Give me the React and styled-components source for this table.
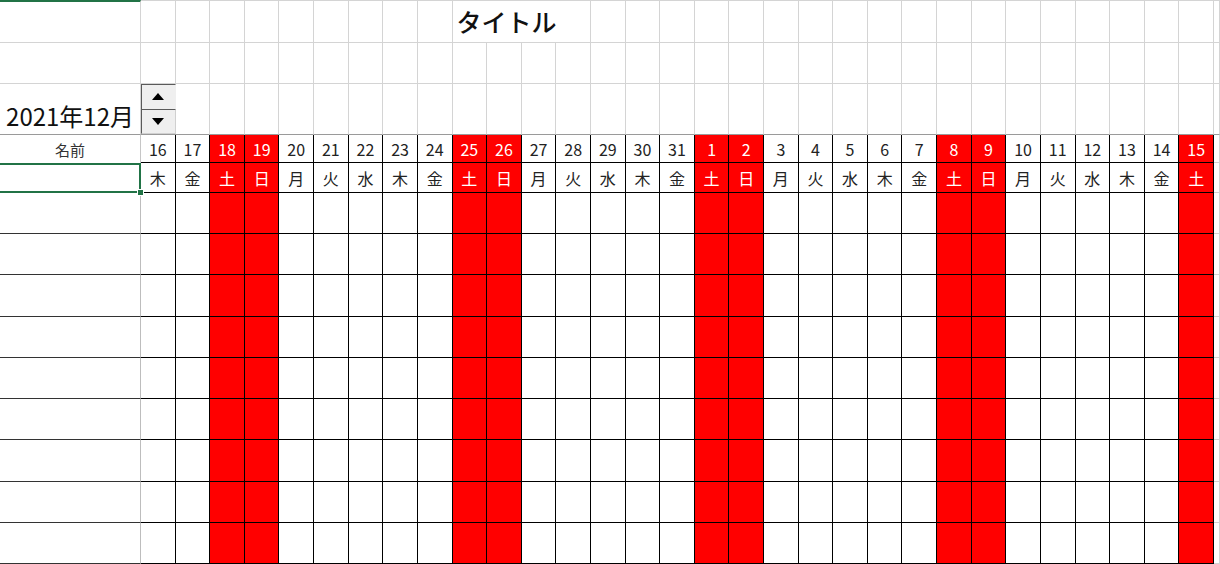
import React from 'react';
import styled, { createGlobalStyle } from 'styled-components';

const GlobalStyle = createGlobalStyle`
  html, body {
    margin: 0;
    background: #fff;
    overflow: hidden;
  }
  body {
    font-family: "Noto Sans CJK JP", "Noto Sans", sans-serif;
    color: #222;
  }
`;

const GREEN = '#217346';
const GRID = '#d4d4d4';

const Sheet = styled.div`
  display: grid;
  width: 1220px;
  height: 564px;
  grid-template-columns: 141px repeat(31, minmax(0, 1fr)) 6px;
  grid-template-rows: 43px 41px 51px 28px 30px repeat(9, minmax(0, 1fr));
`;

// plain sheet cell, only the light excel gridlines
const GridCell = styled.div`
  box-sizing: border-box;
  border-right: 1px solid ${GRID};
  border-bottom: 1px solid ${p => p.$under || GRID};
  border-top: ${p => (p.$top ? p.$top : 'none')};
`;

const TitleCell = styled.div`
  grid-column: span 4;
  box-sizing: border-box;
  border-top: 1px solid ${GRID};
  border-right: 1px solid ${GRID};
  border-bottom: 1px solid ${GRID};
  display: flex;
  align-items: center;
  padding: 0 0 1px 4px;
  font-size: 25px;
  font-weight: 500;
  color: #111;
  white-space: nowrap;
`;

const MonthCell = styled.div`
  box-sizing: border-box;
  border-right: 1px solid ${GRID};
  border-bottom: 1px solid #9a9a9a;
  display: flex;
  justify-content: flex-end;
  align-items: flex-end;
  padding: 0 6px 1px 0;
  font-size: 24px;
  line-height: 1.4;
  color: #111;
  white-space: nowrap;
`;

const SpinCell = styled.div`
  box-sizing: border-box;
  border-bottom: 1px solid #9a9a9a;
  display: flex;
  flex-direction: column;
`;

const SpinButton = styled.div`
  flex: 1;
  display: flex;
  align-items: center;
  justify-content: center;
  background: #efefef;
  border-left: 1px solid #5a5a5a;
  border-top: ${p => (p.$up ? '1px solid #5a5a5a' : 'none')};
  border-bottom: 1px solid ${p => (p.$up ? '#5a5a5a' : '#d0d0d0')};
  border-right: 1px solid ${p => (p.$up ? '#efefef' : '#d0d0d0')};
`;

const NameHead = styled.div`
  box-sizing: border-box;
  border-right: 1px solid #c6c6c6;
  display: flex;
  align-items: center;
  justify-content: center;
  font-size: 15px;
  color: #333;
`;

const SelectedCell = styled.div`
  position: relative;
  box-sizing: border-box;
  border-top: 2px solid ${GREEN};
  border-bottom: 2px solid ${GREEN};
  border-right: 2px solid ${GREEN};
`;

const FillHandle = styled.span`
  position: absolute;
  right: -5px;
  bottom: -5px;
  width: 5px;
  height: 5px;
  background: ${GREEN};
  border: 1px solid #fff;
`;

const DayCell = styled.div`
  box-sizing: border-box;
  border-right: 1px solid #000;
  border-bottom: 1px solid #000;
  background: ${p => (p.$holiday ? '#ff0000' : '#fff')};
  color: ${p => (p.$holiday ? '#fff' : '#222')};
  display: flex;
  align-items: center;
  justify-content: center;
  font-size: 16px;
  padding-top: ${p => (p.$kanji ? '0' : '1px')};
`;

const NameBodyCell = styled.div`
  box-sizing: border-box;
  border-right: 1px solid #bdbdbd;
  border-bottom: 1px solid #333;
`;

const Arrow = ({ up }) => (
  <svg width="12" height="7" viewBox="0 0 12 7">
    <path d={up ? 'M0 7 L6 0 L12 7 Z' : 'M0 0 L6 7 L12 0 Z'} fill="#000" />
  </svg>
);

const WEEK = ['日', '月', '火', '水', '木', '金', '土'];

const days = Array.from({ length: 31 }, (_, i) => {
  const d = new Date(2021, 11, 16 + i);
  const w = d.getDay();
  return { date: d.getDate(), week: WEEK[w], holiday: w === 0 || w === 6 };
});

const BODY_ROWS = 9;

export default function App() {
  return (
    <>
      <GlobalStyle />
      <Sheet>
        {/* row 1: title */}
        <GridCell $top={`2px solid ${GREEN}`} />
        {days.slice(0, 9).map((d, i) => (
          <GridCell key={'t' + i} $top={`1px solid ${GRID}`} />
        ))}
        <TitleCell>タイトル</TitleCell>
        {days.slice(13).map((d, i) => (
          <GridCell key={'t2' + i} $top={`1px solid ${GRID}`} />
        ))}
        <GridCell $top={`1px solid ${GRID}`} />

        {/* row 2: empty */}
        {Array.from({ length: 33 }, (_, i) => (
          <GridCell key={'e' + i} />
        ))}

        {/* row 3: month + spinner */}
        <MonthCell>2021年12月</MonthCell>
        <SpinCell>
          <SpinButton $up>
            <Arrow up />
          </SpinButton>
          <SpinButton>
            <Arrow />
          </SpinButton>
        </SpinCell>
        {days.slice(1).map((d, i) => (
          <GridCell key={'m' + i} $under="#9a9a9a" />
        ))}
        <GridCell $under="#9a9a9a" />

        {/* row 4: dates */}
        <NameHead>名前</NameHead>
        {days.map((d, i) => (
          <DayCell key={'d' + i} $holiday={d.holiday}>
            {d.date}
          </DayCell>
        ))}
        <GridCell />

        {/* row 5: weekdays */}
        <SelectedCell>
          <FillHandle />
        </SelectedCell>
        {days.map((d, i) => (
          <DayCell key={'w' + i} $holiday={d.holiday} $kanji>
            {d.week}
          </DayCell>
        ))}
        <GridCell />

        {/* body */}
        {Array.from({ length: BODY_ROWS }, (_, r) => (
          <React.Fragment key={'r' + r}>
            <NameBodyCell />
            {days.map((d, i) => (
              <DayCell key={i} $holiday={d.holiday} />
            ))}
            <GridCell />
          </React.Fragment>
        ))}
      </Sheet>
    </>
  );
}
